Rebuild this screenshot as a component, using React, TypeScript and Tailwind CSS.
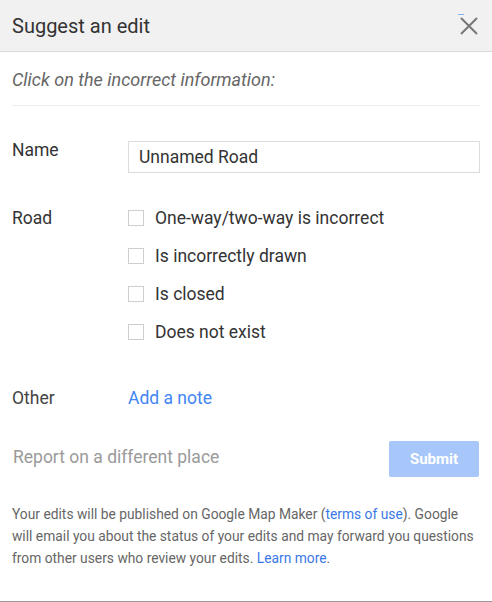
import React from "react";

function Check({ label }: { label: string }) {
  return (
    <div className="flex items-center h-[38px]">
      <span className="w-[16px] h-[16px] border border-[#cfcfcf] bg-white shrink-0" />
      <span className="ml-[11px] text-[17.5px] leading-[20px] text-[#333]">{label}</span>
    </div>
  );
}

export default function App() {
  return (
    <div
      className="w-[492px] h-[602px] bg-white flex flex-col relative overflow-hidden"
      style={{ fontFamily: "Roboto, 'Liberation Sans', sans-serif" }}
    >
      <div className="h-[52px] bg-[#f1f1f1] border-b border-[#d9d9d9] flex items-center justify-between pl-[12px] pr-[13px] shrink-0">
        <span className="text-[20px] leading-[24px] text-[#333]">Suggest an edit</span>
        <div className="relative w-[20px] h-[20px]">
          <span className="absolute left-[-1px] top-[-2px] w-[6px] h-[1px] bg-[#8ab4f8]" />
          <svg width="20" height="20" viewBox="0 0 20 20">
            <path d="M2 2 L18 18 M18 2 L2 18" stroke="#777" strokeWidth="2" />
          </svg>
        </div>
      </div>
      <div className="px-[12px]">
        <div className="h-[54px] flex items-center border-b border-[#ececec] pt-[3px]">
          <span className="italic text-[18px] leading-[22px] text-[#666]">Click on the incorrect information:</span>
        </div>
      </div>
      <div className="px-[12px] pt-[35px] flex">
        <div className="w-[116px] text-[17.5px] leading-[20px] text-[#333] -mt-[1px]">Name</div>
        <div className="flex-1 h-[32px] border border-[#dcdcdc] flex items-center px-[10px] text-[17.5px] text-[#333]">
          Unnamed Road
        </div>
      </div>
      <div className="px-[12px] pt-[26px] flex">
        <div className="w-[116px] text-[17.5px] text-[#333] h-[38px] flex items-center">Road</div>
        <div className="flex flex-col">
          <Check label="One-way/two-way is incorrect" />
          <Check label="Is incorrectly drawn" />
          <Check label="Is closed" />
          <Check label="Does not exist" />
        </div>
      </div>
      <div className="px-[12px] pt-[37px] flex h-[90px]">
        <div className="w-[116px] text-[17.5px] leading-[20px] text-[#444]">Other</div>
        <span className="text-[17.5px] leading-[20px] text-[#4285f4]">Add a note</span>
      </div>
      <div className="px-[13px] flex items-center justify-between h-[36px]">
        <span className="text-[17.5px] text-[#9a9a9a] -mt-[3px]">Report on a different place</span>
        <button className="w-[90px] h-[36px] rounded-[2px] bg-[#a7c7fb] text-white text-[15px] font-bold">
          Submit
        </button>
      </div>
      <div className="px-[12px] pt-[26px] text-[13.8px] leading-[22px] text-[#666] whitespace-nowrap">
        Your edits will be published on Google Map Maker (<span className="text-[#3b78e7]">terms of use</span>). Google
        <br />
        will email you about the status of your edits and may forward you questions
        <br />
        from other users who review your edits. <span className="text-[#3b78e7]">Learn more</span>.
      </div>
      <div className="absolute left-0 right-0 bottom-0 h-[1px] bg-[#9a9a9a]" />
    </div>
  );
}
